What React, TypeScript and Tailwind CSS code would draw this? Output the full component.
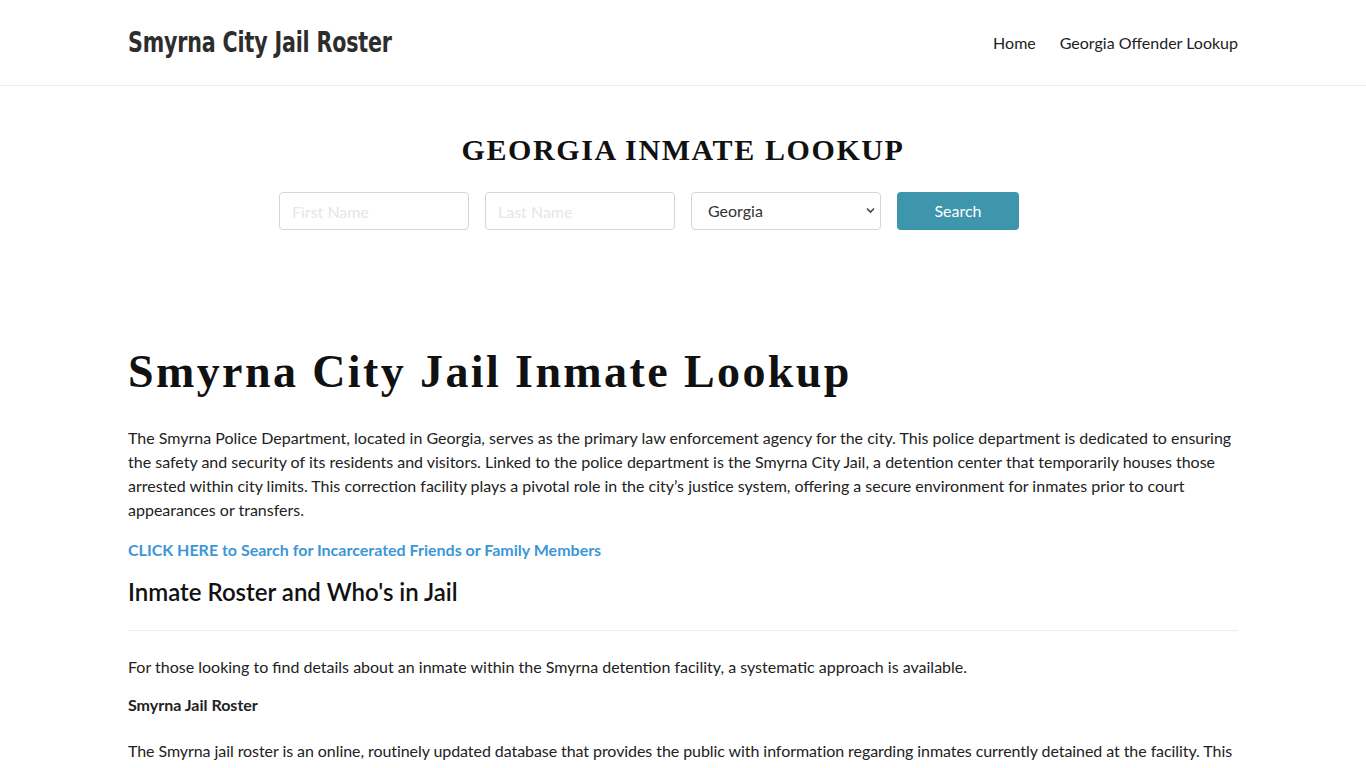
import React from "react";

const body = { fontFamily: "Lato, 'Open Sans', sans-serif" };
const serif = { fontFamily: "'Liberation Serif', 'DejaVu Serif', serif" };
const condensed = { fontFamily: "'Liberation Sans Narrow', 'DejaVu Sans Condensed', 'Roboto Condensed', sans-serif" };

function Header() {
  return (
    <header className="h-[86px] border-b border-[#ececec] bg-white">
      <div className="mx-auto flex h-full w-[1110px] items-center justify-between">
        <a href="#" style={condensed} className="origin-left text-[29px] font-bold tracking-[-0.2px] text-[#2d2d2d] [transform:scaleX(0.79)]">
          Smyrna City Jail Roster
        </a>
        <nav className="flex items-center gap-6 text-[16px] text-[#222]">
          <a href="#">Home</a>
          <a href="#">Georgia Offender Lookup</a>
        </nav>
      </div>
    </header>
  );
}

function SearchBox() {
  return (
    <section className="pt-[46px] pb-[40px] text-center">
      <h2 style={serif} className="text-[30px] font-bold leading-[36px] tracking-[1.6px] text-[#111]">
        GEORGIA INMATE LOOKUP
      </h2>
      <form className="mt-[24px] flex justify-center gap-4 pr-[68px]" onSubmit={e => e.preventDefault()}>
        <input
          placeholder="First Name"
          className="h-[38px] w-[190px] rounded border border-[#d6d6d6] px-3 text-[16px] outline-none placeholder:text-[#e6e6e6]"
        />
        <input
          placeholder="Last Name"
          className="h-[38px] w-[190px] rounded border border-[#d6d6d6] px-3 text-[16px] outline-none placeholder:text-[#e6e6e6]"
        />
        <div className="relative">
          <select className="h-[38px] w-[190px] appearance-none rounded border border-[#d6d6d6] bg-white pl-4 text-left text-[16px] text-[#333] outline-none">
            <option>Georgia</option>
          </select>
          <svg className="pointer-events-none absolute right-[6px] top-[15px]" width="9" height="7" viewBox="0 0 9 7">
            <path d="M1 1.5 L4.5 5 L8 1.5" fill="none" stroke="#444" strokeWidth="1.6" />
          </svg>
        </div>
        <button className="h-[38px] w-[122px] rounded bg-[#3e96ad] text-[16px] text-white">Search</button>
      </form>
    </section>
  );
}

export default function App() {
  return (
    <div style={body} className="min-h-screen bg-white text-[16px] text-[#222]">
      <Header />
      <SearchBox />
      <main className="mx-auto w-[1110px] pt-[76px]">
        <h1 style={serif} className="text-[46px] font-bold leading-[52px] tracking-[2.4px] text-[#111]">
          Smyrna City Jail Inmate Lookup
        </h1>
        <p className="mt-[28px] leading-[24px]">
          The Smyrna Police Department, located in Georgia, serves as the primary law enforcement agency for the city. This police department is dedicated to ensuring the safety and security of its residents and visitors. Linked to the police department is the Smyrna City Jail, a detention center that temporarily houses those arrested within city limits. This correction facility plays a pivotal role in the city’s justice system, offering a secure environment for inmates prior to court appearances or transfers.
        </p>
        <p className="mt-[16px] leading-[24px]">
          <a href="#" className="font-bold text-[#3c97d6]">CLICK HERE to Search for Incarcerated Friends or Family Members</a>
        </p>
        <h2 className="mt-[14px] text-[24px] font-semibold leading-[32px] text-[#111]">Inmate Roster and Who's in Jail</h2>
        <hr className="mt-[22px] border-t border-[#ececec]" />
        <p className="mt-[24px] leading-[24px]">
          For those looking to find details about an inmate within the Smyrna detention facility, a systematic approach is available.
        </p>
        <p className="mt-[14px] font-bold leading-[24px]">Smyrna Jail Roster</p>
        <p className="mt-[22px] leading-[24px] tracking-[-0.07px]">
          The Smyrna jail roster is an online, routinely updated database that provides the public with information regarding inmates currently detained at the facility. This roster typically includes the inmate's full name, booking date, charges, bail amount and a booking photograph, allowing family and friends to confirm the custody status of a loved one.
        </p>
      </main>
    </div>
  );
}
